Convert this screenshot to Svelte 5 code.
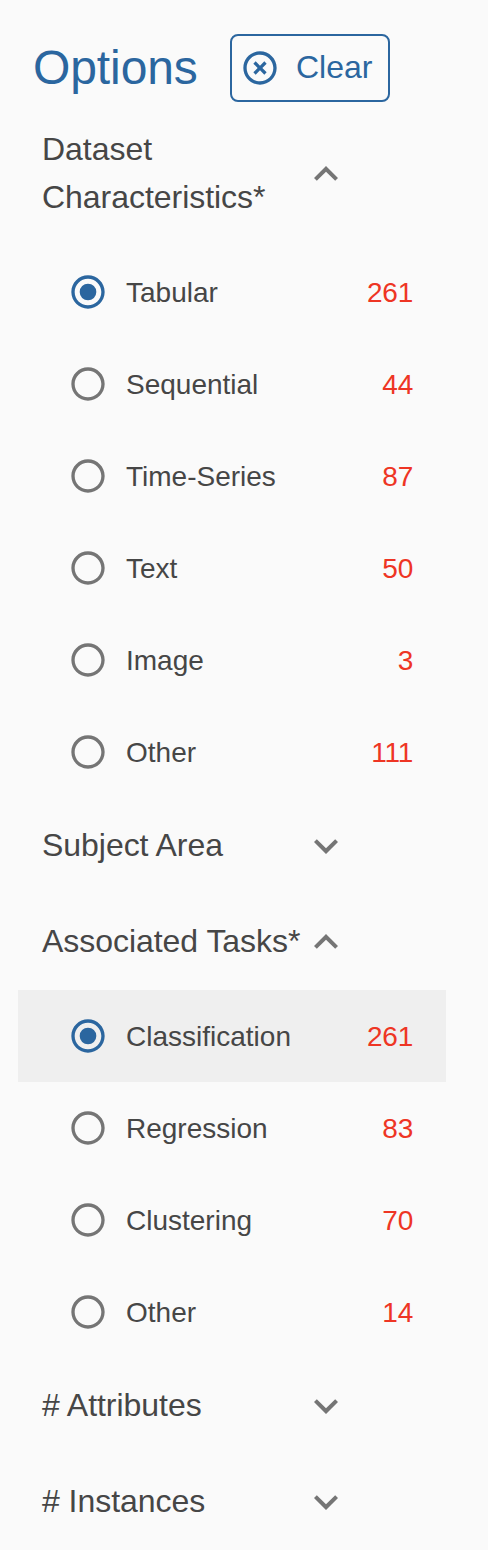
<script>
  const groups = [
    { title: 'Dataset Characteristics*', open: true, tall: true, selected: 0, items: [['Tabular', 261], ['Sequential', 44], ['Time-Series', 87], ['Text', 50], ['Image', 3], ['Other', 111]] },
    { title: 'Subject Area', items: [] },
    { title: 'Associated Tasks*', open: true, selected: 0, hovered: 0, items: [['Classification', 261], ['Regression', 83], ['Clustering', 70], ['Other', 14]] },
    { title: '# Attributes', items: [] },
    { title: '# Instances', items: [] }
  ];
</script>

<aside>
  <header>
    <h1>Options</h1>
    <button class="clear">
      <svg width="40" height="40" viewBox="0 0 24 24" fill="currentColor"><path d="M14.59 8 12 10.59 9.41 8 8 9.41 10.59 12 8 14.59 9.41 16 12 13.41 14.59 16 16 14.59 13.41 12 16 9.41 14.59 8zM12 2C6.47 2 2 6.47 2 12s4.47 10 10 10 10-4.47 10-10S17.53 2 12 2zm0 18c-4.41 0-8-3.59-8-8s3.59-8 8-8 8 3.59 8 8-3.59 8-8 8z" /></svg>
      <span>Clear</span>
    </button>
  </header>
  {#each groups as g}
    <section>
      <div class="title" class:tall={g.tall}>
        <h2>{g.title}</h2>
        <svg class="chevron" class:up={g.open} width="48" height="48" viewBox="0 0 24 24"><path d="M16.59 8.59 12 13.17 7.41 8.59 6 10l6 6 6-6z" /></svg>
      </div>
      {#if g.open}
        <ul>
          {#each g.items as [name, count], i}
            <li class:hovered={g.hovered === i}>
              <svg class="radio" class:checked={g.selected === i} width="40" height="40" viewBox="0 0 24 24">
                <path d="M12 2C6.48 2 2 6.48 2 12s4.48 10 10 10 10-4.48 10-10S17.52 2 12 2zm0 18c-4.42 0-8-3.58-8-8s3.58-8 8-8 8 3.58 8 8-3.58 8-8 8z" />
                {#if g.selected === i}<circle cx="12" cy="12" r="5" />{/if}
              </svg>
              <span class="name">{name}</span>
              <span class="count">{count}</span>
            </li>
          {/each}
        </ul>
      {/if}
    </section>
  {/each}
</aside>

<style>
  :global(body) { margin: 0; background: #fafafa; }
  aside { box-sizing: border-box; width: 488px; height: 1550px; padding-top: 34px; overflow: hidden; background: #fafafa; color: #464646; font-family: "Liberation Sans", Arial, sans-serif; }
  header { display: flex; align-items: center; height: 68px; padding-left: 33px; margin-bottom: 22px; color: #2b669f; }
  h1 { width: 197px; margin: 0; font-size: 48px; font-weight: 400; line-height: 68px; letter-spacing: -0.1px; }
  .clear { box-sizing: border-box; display: flex; align-items: center; gap: 16px; width: 160px; height: 68px; padding: 0 0 0 8px; border: 2px solid #2b669f; border-radius: 8px; background: transparent; color: inherit; font: 32px "Liberation Sans", Arial, sans-serif; }
  .clear span { padding-bottom: 2px; }
  .title { display: flex; align-items: center; height: 96px; padding-left: 42px; }
  .title.tall { height: 100px; padding-bottom: 22px; }
  h2 { box-sizing: border-box; width: 260px; margin: 0; padding-bottom: 2px; font-size: 32px; font-weight: 400; line-height: 48px; letter-spacing: -0.04px; white-space: nowrap; }
  .tall h2 { white-space: normal; }
  .chevron { flex: none; fill: #757575; }
  .chevron.up { transform: rotate(180deg); }
  ul { margin: 0; padding: 0; list-style: none; }
  li { box-sizing: border-box; display: flex; align-items: center; width: 428px; height: 92px; margin-left: 18px; padding: 0 33px 0 50px; font-size: 28px; line-height: 32px; }
  li.hovered { background: #efefef; }
  .radio { flex: none; fill: #757575; }
  .radio.checked { fill: #2b669f; }
  .name { margin-left: 18px; padding-top: 1px; }
  .count { margin-left: auto; padding-top: 1px; color: #ee3524; letter-spacing: -0.25px; }
</style>
